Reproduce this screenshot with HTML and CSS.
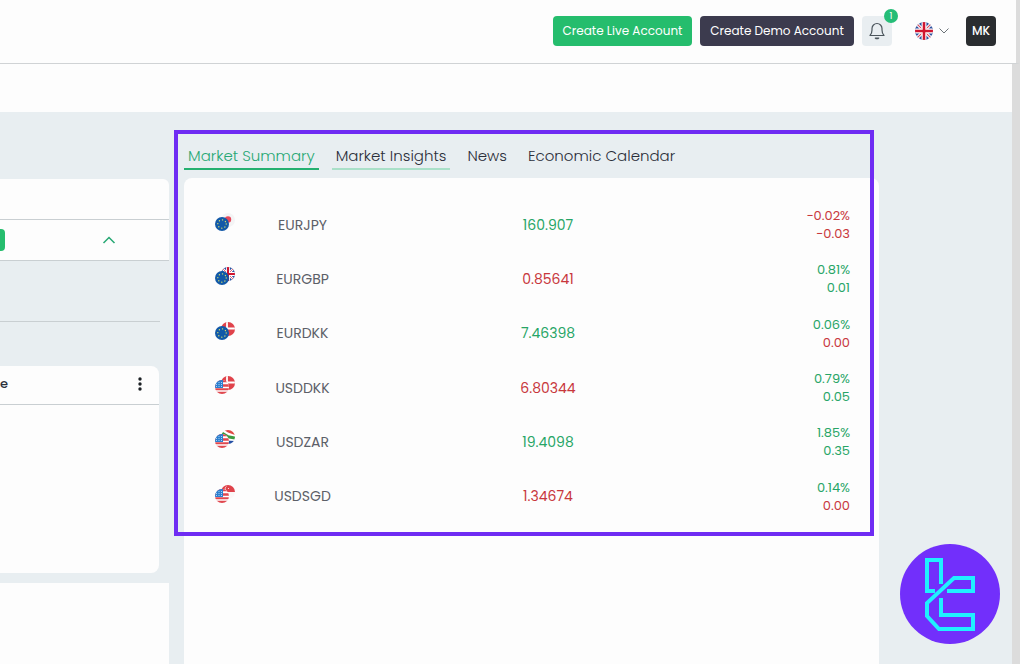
FILE: index.html
```
<!DOCTYPE html>
<html lang="en">
<head>
  <meta charset="UTF-8" />
  <meta name="viewport" content="width=device-width, initial-scale=1" />
  <title>Market Summary</title>
  <link rel="stylesheet" href="styles.css">
</head>
<body>
  <!-- Shared flag artwork -->
  <svg class="defs" aria-hidden="true">
    <defs>
      <clipPath id="round"><circle cx="7" cy="7" r="7" /></clipPath>
      <symbol id="eu" viewBox="0 0 14 14">
        <circle cx="7" cy="7" r="7" fill="#1259a8" />
        <circle cx="7" cy="7" r="4.2" fill="none" stroke="#d8e06a" stroke-width="1.3" stroke-linecap="round" stroke-dasharray="0.1 3.2" />
      </symbol>
      <symbol id="us" viewBox="0 0 14 14">
        <g clip-path="url(#round)">
          <path fill="#fff" d="M0 0h14v14H0z" />
          <path stroke="#e0484f" stroke-width="2.4" d="M0 1h14M0 5.500h14M0 13h14" />
          <path stroke="#e0484f" stroke-width="2" d="M0 9.300h14" />
          <path fill="#2c7fd0" d="M0 0h8v8H0z" />
          <path stroke="#b9dcf5" stroke-width="0.9" stroke-dasharray="1 1.5" d="M1 2.5h7M1 4.5h7M1 6.5h7" />
        </g>
      </symbol>
      <symbol id="jp" viewBox="0 0 14 14">
        <circle cx="7" cy="7" r="7" fill="#f4f4f5" />
        <circle cx="7" cy="6.5" r="3.2" fill="#e5485a" />
      </symbol>
      <symbol id="gb" viewBox="0 0 14 14">
        <g clip-path="url(#round)">
          <path fill="#2f529f" d="M0 0h14v14H0z" />
          <path stroke="#fff" stroke-width="2.4" d="M0 0l14 14M14 0L0 14" />
          <path stroke="#d8435a" stroke-width="0.8" d="M0 0l14 14M14 0L0 14" />
          <path stroke="#fff" stroke-width="3.8" d="M7 0v14M0 7h14" />
          <path stroke="#d0142f" stroke-width="2" d="M7 0v14M0 7h14" />
        </g>
      </symbol>
      <symbol id="dk" viewBox="0 0 14 14">
        <g clip-path="url(#round)">
          <path fill="#e0434b" d="M0 0h14v14H0z" />
          <path stroke="#fff" stroke-width="1.8" d="M6 0v14M0 6.5h14" />
        </g>
      </symbol>
      <symbol id="za" viewBox="0 0 14 14">
        <g clip-path="url(#round)">
          <path fill="#fff" d="M0 0h14v14H0z" />
          <path fill="#df4a45" d="M3 0h11v5L7 2.500z" />
          <path fill="#2450a5" d="M5 10.500l9 .5v3H5z" />
          <path fill="none" stroke="#3c9a3f" stroke-width="3.200" d="M0 2.500l7 4.300 7 1.200" />
          <path fill="#e8b53a" d="M0 4l4 3-4 3z" />
        </g>
      </symbol>
      <symbol id="sg" viewBox="0 0 14 14">
        <g clip-path="url(#round)">
          <path fill="#fbf7f7" d="M0 0h14v14H0z" />
          <path fill="#df434b" d="M0 0h14v7H0z" />
          <path fill="none" stroke="#fff" stroke-width="0.7" d="M5.500 1.500a2.200 2.200 0 0 0 0 4" />
          <circle cx="7.500" cy="3.500" r="0.600" fill="#fff" />
        </g>
      </symbol>
    </defs>
  </svg>

  <header class="topbar">
    <button class="btn btn-live">Create Live Account</button>
    <button class="btn btn-demo">Create Demo Account</button>
    <button class="bell" aria-label="Notifications">
      <svg width="16" height="18" viewBox="0 0 16 18" fill="none" stroke="#4b555c" stroke-width="1.2" stroke-linecap="round" stroke-linejoin="round">
        <path d="M1 13.500c1.500-1.500 2-3 2-5.500V6.500a5 5 0 0 1 10 0V8c0 2.500.5 4 2 5.500z" />
        <path d="M6.300 16c.9 1 2.500 1 3.400 0z" />
      </svg>
      <span class="badge">1</span>
    </button>
    <button class="lang" aria-label="Language">
      <svg width="18" height="18"><use href="#gb" /></svg>
      <svg width="10" height="6" viewBox="0 0 10 6" fill="none" stroke="#6b7378"><path d="M.5.500L5 5 9.500.500" /></svg>
    </button>
    <button class="avatar">MK</button>
  </header>

  <div class="page">
    <div class="subbar"></div>

    <main>
      <aside>
        <div class="account">
          <div class="account-head"></div>
          <div class="account-row">
            <button class="tag" aria-label="Account type"></button>
            <button class="collapse" aria-label="Collapse">
              <svg width="14" height="8" viewBox="0 0 14 8" fill="none" stroke="#27a874" stroke-width="1.500"><path d="M1.500 7L7 1.500 12.500 7" /></svg>
            </button>
          </div>
        </div>
        <div class="divider"></div>
        <div class="card">
          <div class="card-head">
            <span>e</span>
            <button class="more" aria-label="More">
              <svg width="4" height="14" viewBox="0 0 4 14" fill="#1c2024"><circle cx="2" cy="2" r="1.700" /><circle cx="2" cy="7" r="1.700" /><circle cx="2" cy="12" r="1.700" /></svg>
            </button>
          </div>
        </div>
        <div class="panel"></div>
      </aside>

      <section class="market">
        <div class="summary">
          <nav class="tabs">
            <a href="#" class="active">Market Summary</a>
            <a href="#" class="hovered">Market Insights</a>
            <a href="#">News</a>
            <a href="#">Economic Calendar</a>
          </nav>
          <div class="quotes">
            <table>
              <colgroup><col class="col-flag"><col class="col-symbol"><col><col class="col-change"></colgroup>
              <tr>
                <td class="flag"><svg width="20" height="18"><use href="#jp" x="6" width="14" height="14" /><use href="#eu" y="4" width="14" height="14" /></svg></td>
                <td class="symbol">EURJPY</td>
                <td class="up">160.907</td>
                <td class="change"><div class="down">−0.02%</div><div class="down">−0.03</div></td>
              </tr>
              <tr>
                <td class="flag"><svg width="20" height="18"><use href="#gb" x="6" width="14" height="14" /><use href="#eu" y="4" width="14" height="14" /></svg></td>
                <td class="symbol">EURGBP</td>
                <td class="down">0.85641</td>
                <td class="change"><div class="up">0.81%</div><div class="up">0.01</div></td>
              </tr>
              <tr>
                <td class="flag"><svg width="20" height="18"><use href="#dk" x="6" width="14" height="14" /><use href="#eu" y="4" width="14" height="14" /></svg></td>
                <td class="symbol">EURDKK</td>
                <td class="up">7.46398</td>
                <td class="change"><div class="up">0.06%</div><div class="down">0.00</div></td>
              </tr>
              <tr>
                <td class="flag"><svg width="20" height="18"><use href="#dk" x="6" width="14" height="14" /><use href="#us" y="4" width="14" height="14" /></svg></td>
                <td class="symbol">USDDKK</td>
                <td class="down">6.80344</td>
                <td class="change"><div class="up">0.79%</div><div class="up">0.05</div></td>
              </tr>
              <tr>
                <td class="flag"><svg width="20" height="18"><use href="#za" x="6" width="14" height="14" /><use href="#us" y="4" width="14" height="14" /></svg></td>
                <td class="symbol">USDZAR</td>
                <td class="up">19.4098</td>
                <td class="change"><div class="up">1.85%</div><div class="up">0.35</div></td>
              </tr>
              <tr>
                <td class="flag"><svg width="20" height="18"><use href="#sg" x="6" width="14" height="14" /><use href="#us" y="4" width="14" height="14" /></svg></td>
                <td class="symbol">USDSGD</td>
                <td class="down">1.34674</td>
                <td class="change"><div class="up">0.14%</div><div class="down">0.00</div></td>
              </tr>
            </table>
          </div>
        </div>
        <div class="market-rest"></div>
      </section>
    </main>
  </div>

  <svg class="brand" width="100" height="100" viewBox="0 0 100 100" fill="none" stroke="#1ff0ff" stroke-width="4">
    <circle cx="50" cy="50" r="50" fill="#722ffb" stroke="none" />
    <path d="M35 47h-8V16h14v24" />
    <path d="M47 47h26V34H54L27 59v13l12 13h34V71H41V54" />
  </svg>
</body>
</html>
```
FILE: styles.css
```
* {
  box-sizing: border-box;
}

body {
  margin: 0;
  min-height: 100vh;
  display: flex;
  flex-direction: column;
  font-family: Poppins, Inter, sans-serif;
  background: #e8eef1;
  color: #2b2f3a;
}

button {
  font-family: inherit;
  border: none;
  padding: 0;
  background: none;
  cursor: pointer;
}

svg {
  display: block;
}

.defs {
  position: absolute;
  width: 0;
  height: 0;
}

/* Top bar */
.topbar {
  display: flex;
  align-items: center;
  justify-content: flex-end;
  gap: 8px;
  height: 64px;
  padding: 0 20px 2px;
  background: #fdfdfd;
  border-bottom: 1px solid #d0d3d5;
  border-right: 4px solid #dcdcdc;
}

.btn {
  height: 30px;
  padding: 0 8px;
  border-radius: 4px;
  color: #fff;
  font-size: 12px;
}

.btn-live {
  min-width: 139px;
  background: #25bd6d;
}

.btn-demo {
  min-width: 154px;
  background: #3c3b4e;
}

.bell {
  position: relative;
  width: 30px;
  height: 30px;
  display: flex;
  align-items: center;
  justify-content: center;
  border-radius: 4px;
  background: #e9eef1;
}

.badge {
  position: absolute;
  top: -7px;
  right: -6px;
  width: 14px;
  height: 14px;
  border-radius: 50%;
  background: #25bd77;
  color: #fff;
  font-size: 9px;
  line-height: 14px;
}

.lang {
  display: flex;
  align-items: center;
  gap: 6px;
  padding: 0 9px 0 15px;
}

.avatar {
  width: 30px;
  height: 30px;
  border-radius: 4px;
  background: #2a2d30;
  color: #fff;
  font-size: 12px;
  font-weight: 500;
}

/* Page */
.page {
  flex: 1;
  display: flex;
  flex-direction: column;
  border-right: 8px solid #dcdcdc;
}

.subbar {
  height: 48px;
  background: #fdfdfd;
}

main {
  flex: 1;
  display: flex;
  gap: 15px;
  padding: 18px 133px 0 0;
}

/* Left column */
aside {
  flex: 0 0 169px;
  display: flex;
  flex-direction: column;
  padding-top: 49px;
}

.account {
  background: #fdfdfd;
  border-bottom: 1px solid #c9cfd2;
  border-top-right-radius: 6px;
}

.account-head {
  height: 41px;
  border-bottom: 1px solid #c9cfd2;
}

.account-row {
  height: 40px;
  display: flex;
  align-items: center;
  gap: 97px;
}

.tag {
  width: 5px;
  height: 22px;
  border-radius: 0 4px 4px 0;
  background: #25bd6d;
}

.divider {
  height: 61px;
  margin-right: 9px;
  border-bottom: 1px solid #c9cfd2;
}

.card {
  height: 207px;
  margin: 44px 10px 10px 0;
  background: #fdfdfd;
  border-radius: 0 8px 8px 0;
}

.card-head {
  height: 39px;
  display: flex;
  align-items: center;
  justify-content: space-between;
  padding: 0 17px 2px 0;
  border-bottom: 1px solid #c9cfd2;
  font-size: 13px;
  font-weight: 500;
}

.panel {
  flex: 1;
  background: #fdfdfd;
}

/* Market summary */
.market {
  flex: 1;
  display: flex;
  flex-direction: column;
}

.summary {
  position: relative;
}

/* purple frame round the summary */
.summary::after {
  content: "";
  position: absolute;
  top: 0;
  bottom: 0;
  left: -10px;
  right: 5px;
  border: 4px solid #6f2cf3;
  pointer-events: none;
}

.tabs {
  display: flex;
  align-items: flex-start;
  gap: 13px;
  height: 48px;
  padding-top: 14px;
}

.tabs a {
  padding: 0 4px;
  border-bottom: 2px solid transparent;
  color: #2b2f3a;
  font-size: 15px;
  font-weight: 300;
  line-height: 24px;
  text-decoration: none;
}

.tabs .active {
  color: #27a874;
  border-color: #25b070;
}

.tabs .hovered {
  border-color: #a9e0c8;
}

.quotes {
  height: 358px;
  padding-top: 20px;
  background: #fdfdfd;
  border-radius: 8px 8px 0 0;
}

.market-rest {
  flex: 1;
  background: #fdfdfd;
}

table {
  width: 100%;
  height: 326px;
  table-layout: fixed;
  border-collapse: collapse;
}

.col-flag {
  width: 82px;
}

.col-symbol {
  width: 73px;
}

.col-change {
  width: 122px;
}

td {
  padding: 0;
  text-align: center;
  font-size: 14px;
}

.flag svg {
  margin: 0 auto 6px;
}

.symbol {
  color: #5c6068;
}

.change {
  padding-right: 29px;
  text-align: right;
  font-size: 13px;
  line-height: 18px;
}

.up {
  color: #27a566;
}

.down {
  color: #c8373c;
}

/* Floating brand logo */
.brand {
  position: fixed;
  right: 20px;
  bottom: 20px;
}
```
